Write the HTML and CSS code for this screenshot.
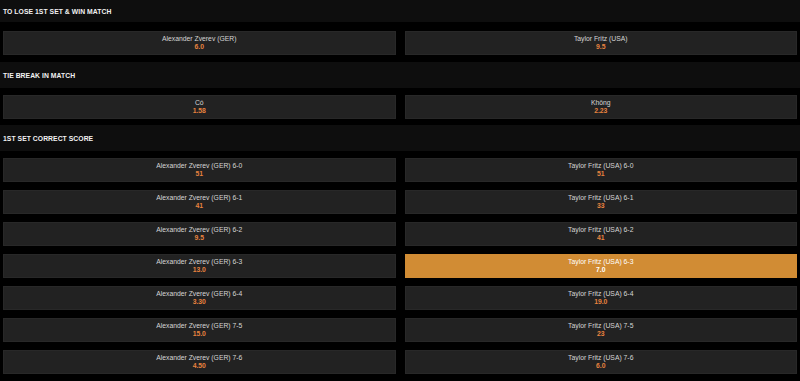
FILE: index.html
```html
<!DOCTYPE html>
<html lang="vi">
<head>
<meta charset="utf-8">
<title>Markets</title>
<link rel="stylesheet" href="styles.css">
</head>
<body>
<div class="markets">
  <section class="market market-first">
    <div class="market-header">TO LOSE 1ST SET &amp; WIN MATCH</div>
    <div class="market-body">
      <div class="odd"><span class="odd-name">Alexander Zverev (GER)</span><span class="odd-price">6.0</span></div>
      <div class="odd"><span class="odd-name">Taylor Fritz (USA)</span><span class="odd-price">9.5</span></div>
    </div>
  </section>
  <section class="market market-second">
    <div class="market-header">TIE BREAK IN MATCH</div>
    <div class="market-body">
      <div class="odd"><span class="odd-name">Có</span><span class="odd-price">1.58</span></div>
      <div class="odd"><span class="odd-name">Không</span><span class="odd-price">2.23</span></div>
    </div>
  </section>
  <section class="market">
    <div class="market-header">1ST SET CORRECT SCORE</div>
    <div class="market-body">
      <div class="odd"><span class="odd-name">Alexander Zverev (GER) 6-0</span><span class="odd-price">51</span></div>
      <div class="odd"><span class="odd-name">Taylor Fritz (USA) 6-0</span><span class="odd-price">51</span></div>
      <div class="odd"><span class="odd-name">Alexander Zverev (GER) 6-1</span><span class="odd-price">41</span></div>
      <div class="odd"><span class="odd-name">Taylor Fritz (USA) 6-1</span><span class="odd-price">33</span></div>
      <div class="odd"><span class="odd-name">Alexander Zverev (GER) 6-2</span><span class="odd-price">9.5</span></div>
      <div class="odd"><span class="odd-name">Taylor Fritz (USA) 6-2</span><span class="odd-price">41</span></div>
      <div class="odd"><span class="odd-name">Alexander Zverev (GER) 6-3</span><span class="odd-price">13.0</span></div>
      <div class="odd odd-selected"><span class="odd-name">Taylor Fritz (USA) 6-3</span><span class="odd-price">7.0</span></div>
      <div class="odd"><span class="odd-name">Alexander Zverev (GER) 6-4</span><span class="odd-price">3.30</span></div>
      <div class="odd"><span class="odd-name">Taylor Fritz (USA) 6-4</span><span class="odd-price">19.0</span></div>
      <div class="odd"><span class="odd-name">Alexander Zverev (GER) 7-5</span><span class="odd-price">15.0</span></div>
      <div class="odd"><span class="odd-name">Taylor Fritz (USA) 7-5</span><span class="odd-price">23</span></div>
      <div class="odd"><span class="odd-name">Alexander Zverev (GER) 7-6</span><span class="odd-price">4.50</span></div>
      <div class="odd"><span class="odd-name">Taylor Fritz (USA) 7-6</span><span class="odd-price">6.0</span></div>
    </div>
  </section>
</div>
</body>
</html>
```

FILE: styles.css
```css
html, body {
  margin: 0;
  padding: 0;
  background: #000;
}

body {
  font-family: "Liberation Sans", Arial, Helvetica, sans-serif;
  overflow: hidden;
}

.markets {
  display: flex;
  flex-direction: column;
}

.market-header {
  height: 26px;
  background: #0e0e0e;
  display: flex;
  align-items: center;
  padding-left: 3px;
  color: #f2f2f2;
  font-weight: bold;
  font-size: 6.8px;
  letter-spacing: 0.05px;
}

.market-body {
  display: grid;
  grid-template-columns: 1fr 1fr;
  column-gap: 9px;
  row-gap: 8px;
  padding: 7px 3px 7px;
}

.market-first .market-header {
  height: 22px;
}

.market-first .market-body {
  padding-top: 9px;
}

.market-second .market-body {
  padding-bottom: 6px;
}

.odd {
  height: 24px;
  box-sizing: border-box;
  background: #222222;
  border: 1px solid #282828;
  display: flex;
  flex-direction: column;
  align-items: center;
  justify-content: center;
  font-size: 6.8px;
  line-height: 8px;
}

.odd-name {
  color: #d6d6d6;
}

.odd-price {
  color: #e8823f;
  font-weight: bold;
}

.odd-selected {
  background: #d18c34;
  border-color: #d18c34;
}

.odd-selected .odd-name,
.odd-selected .odd-price {
  color: #fff;
}
```
